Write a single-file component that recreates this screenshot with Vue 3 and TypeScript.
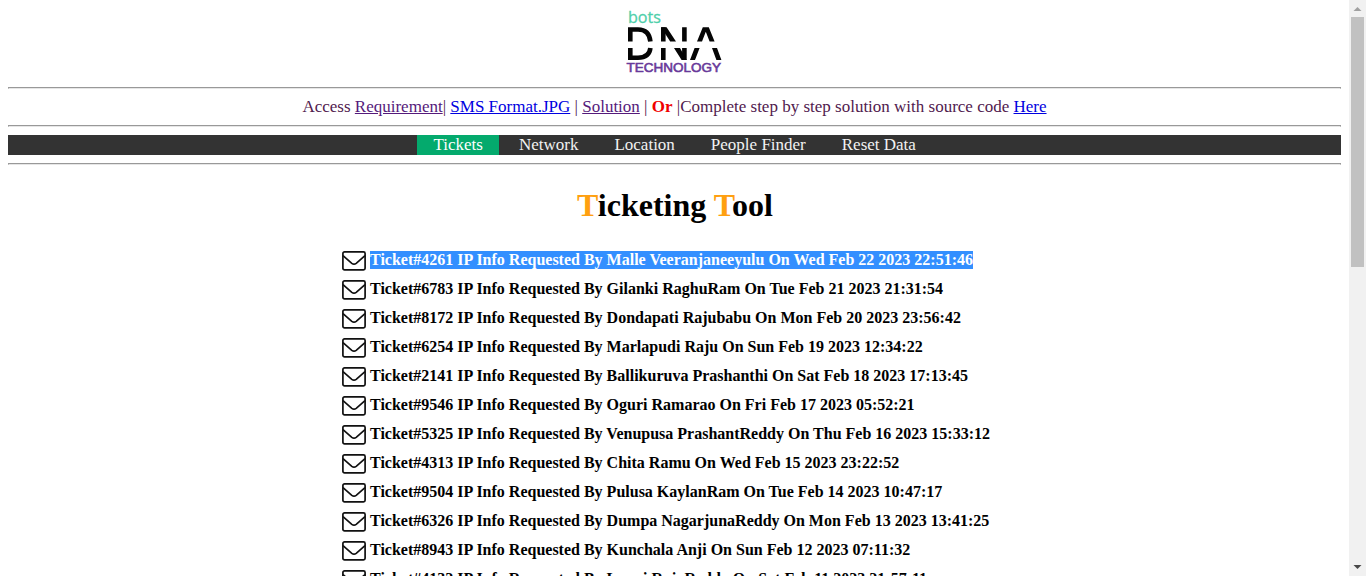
<script setup lang="ts">
interface NavItem {
  label: string
  cls: string
}

const navItems: NavItem[] = [
  { label: 'Tickets', cls: 'tickets' },
  { label: 'Network', cls: 'network' },
  { label: 'Location', cls: 'location' },
  { label: 'People Finder', cls: 'people' },
  { label: 'Reset Data', cls: 'reset' },
]

const selected = '4261'

const tickets: [string, string, string][] = [
  ['4261', 'Malle Veeranjaneeyulu', 'Wed Feb 22 2023 22:51:46'],
  ['6783', 'Gilanki RaghuRam', 'Tue Feb 21 2023 21:31:54'],
  ['8172', 'Dondapati Rajubabu', 'Mon Feb 20 2023 23:56:42'],
  ['6254', 'Marlapudi Raju', 'Sun Feb 19 2023 12:34:22'],
  ['2141', 'Ballikuruva Prashanthi', 'Sat Feb 18 2023 17:13:45'],
  ['9546', 'Oguri Ramarao', 'Fri Feb 17 2023 05:52:21'],
  ['5325', 'Venupusa PrashantReddy', 'Thu Feb 16 2023 15:33:12'],
  ['4313', 'Chita Ramu', 'Wed Feb 15 2023 23:22:52'],
  ['9504', 'Pulusa KaylanRam', 'Tue Feb 14 2023 10:47:17'],
  ['6326', 'Dumpa NagarjunaReddy', 'Mon Feb 13 2023 13:41:25'],
  ['8943', 'Kunchala Anji', 'Sun Feb 12 2023 07:11:32'],
  ['4132', 'Lanni RajaReddy', 'Sat Feb 11 2023 21:57:11'],
]
</script>

<template>
  <div class="window">
    <div class="page">
      <header class="brand">
        <svg class="logo" width="111" height="79" viewBox="0 0 111 79" role="img" aria-label="bots DNA Technology">
          <text class="bots" x="9" y="23" textLength="33" lengthAdjust="spacingAndGlyphs">bots</text>
          <g fill="none" stroke="#050505" stroke-width="4.6">
            <path d="M11.3 41.5V29.5H19C26.5 29.5 30.6 33.5 31.4 41.5M11.3 48V57.7H19C26.5 57.7 30.6 55 31.4 48" />
            <path d="M44.3 41.5V27.3M44.3 48V60M65.4 41.5V27.3M65.4 48V60" />
          </g>
          <g fill="#050505">
            <path d="M42 27.3H47.6L57 41.5H51.2ZM55 48H61L67.7 60H62.6Z" />
            <path d="M83.8 27.3H89.8L95.6 41.5H90.6L86.8 31.8L83 41.5H78ZM75.6 48H80.6L76 60H71ZM93 48H98L102.4 60H97.4Z" />
          </g>
          <text class="technology" x="7.5" y="72" textLength="94.5" lengthAdjust="spacingAndGlyphs">TECHNOLOGY</text>
        </svg>
      </header>
      <hr />
      <p class="access">Access <a class="visited">Requirement</a>| <a>SMS Format.JPG</a> | <a class="visited">Solution</a> | <b>Or</b> |Complete step by step solution with source code <a>Here</a></p>
      <hr />
      <nav>
        <span v-for="item in navItems" :key="item.cls" :class="item.cls">{{ item.label }}</span>
      </nav>
      <hr />
      <h1><span>T</span>icketing <span>T</span>ool</h1>
      <ul>
        <li v-for="[id, name, date] in tickets" :key="id">
          <svg class="mail" width="24" height="20" viewBox="0 0 24 20" fill="none" stroke="#111" stroke-width="1.7">
            <rect x="0.9" y="0.9" width="22.2" height="18" rx="1.6" />
            <path d="M1 4.6L9.8 12.3Q12 14 14.2 12.3L23 4.6" />
          </svg>
          <span class="title" :class="{ selected: id === selected }">Ticket#{{ id }} IP Info Requested By {{ name }} On {{ date }}</span>
        </li>
      </ul>
    </div>
    <aside class="scrollbar">
      <svg width="17" height="17" viewBox="0 0 17 17"><path d="M4.5 11L8.5 7L12.5 11Z" fill="#a0a0a0" /></svg>
      <div class="thumb"></div>
      <svg class="down" width="17" height="17" viewBox="0 0 17 17"><path d="M4.5 6L8.5 10L12.5 6Z" fill="#484848" /></svg>
    </aside>
  </div>
</template>

<style>
body {
  margin: 0;
  background: #fff;
  overflow: hidden;
}
</style>

<style scoped>
.window {
  display: flex;
  width: 1366px;
  height: 576px;
  overflow: hidden;
  font-family: "Liberation Serif", "Times New Roman", serif;
  font-size: 16px;
  color: #000;
}

.page {
  box-sizing: border-box;
  width: 1349px;
  height: 576px;
  padding: 0 8px;
  overflow: hidden;
}

.brand {
  display: flex;
  justify-content: center;
  height: 79px;
}

.logo {
  display: block;
}

.bots {
  font: 17px "Open Sans", sans-serif;
  fill: #4ecfaa;
  stroke: #4ecfaa;
  stroke-width: 0.3px;
}

.technology {
  font: 13px "Liberation Sans", Arial, sans-serif;
  fill: #68399a;
  stroke: #68399a;
  stroke-width: 0.6px;
}

hr {
  box-sizing: border-box;
  height: 2px;
  margin: 8px 0;
  border: 1px solid #999;
  border-bottom-color: #e6e6e6;
}

.access {
  height: 20px;
  margin: 0;
  line-height: 20px;
  text-align: center;
  white-space: nowrap;
  color: #51204e;
  font-size: 17px;
}

.access a {
  color: #0000e0;
  text-decoration: underline;
}

.access a.visited {
  color: #551a7b;
}

.access b {
  color: #f00000;
}

nav {
  display: flex;
  gap: 3px;
  height: 20px;
  padding-left: 409px;
  background: #333;
  color: #f2f2f2;
  font-size: 17px;
  line-height: 20px;
  white-space: nowrap;
}

nav span {
  padding: 0 16.5px;
}

nav .tickets {
  background: #04aa6d;
  color: #fff;
}

h1 {
  height: 37px;
  margin: 22px 0;
  padding-left: 1px;
  font-size: 32px;
  line-height: 37px;
  text-align: center;
}

h1 span {
  color: #ffa010;
}

ul {
  margin: 0;
  padding: 0 0 0 334px;
  list-style: none;
}

li {
  display: flex;
  align-items: flex-start;
  gap: 4px;
  height: 29px;
}

.mail {
  flex: none;
  margin-top: 5px;
}

.title {
  height: 18px;
  margin-top: 5px;
  font-weight: bold;
  line-height: 18px;
  white-space: nowrap;
}

.title.selected {
  background: #338fff;
  color: #fff;
}

.scrollbar {
  display: flex;
  flex-direction: column;
  width: 17px;
  background: #f1f1f1;
}

.thumb {
  width: 13px;
  height: 250px;
  margin: 0 2px;
  background: #c1c1c1;
}

.down {
  margin-top: auto;
}
</style>
